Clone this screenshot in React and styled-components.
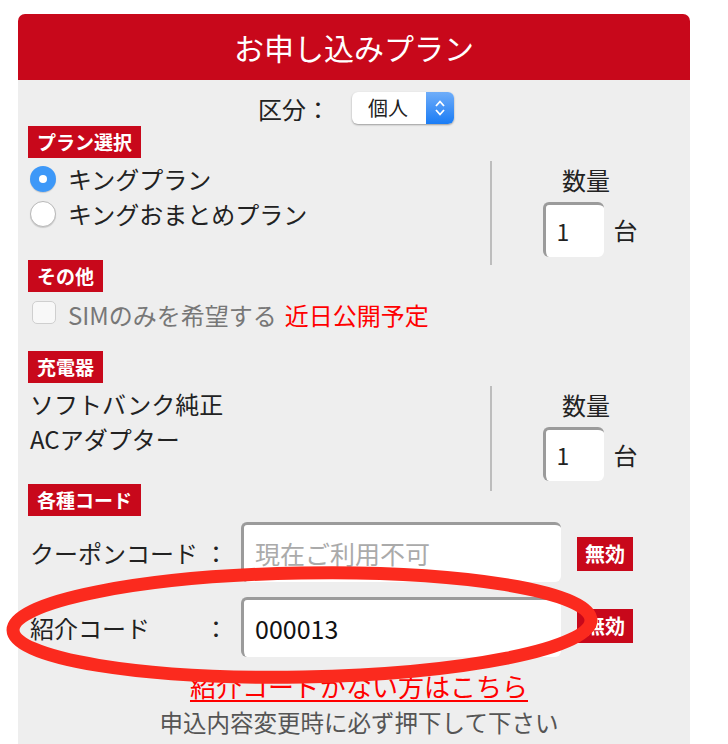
import styled, { createGlobalStyle } from "styled-components";

const GlobalStyle = createGlobalStyle`
  body {
    margin: 0;
    background: #fff;
    font-family: "Noto Sans CJK JP", "Noto Sans", sans-serif;
    color: #222;
  }
`;

const RED = "#c8081b";

const Page = styled.div`
  position: relative;
  width: 728px;
  height: 744px;
  overflow: hidden;
  padding: 14px 0 0 18px;
  box-sizing: border-box;
`;

const Panel = styled.div`
  width: 672px;
`;

const Header = styled.div`
  height: 66px;
  background: ${RED};
  border-radius: 7px 7px 0 0;
  color: #fff;
  font-size: 30px;
  display: flex;
  align-items: center;
  justify-content: center;
`;

const Body = styled.div`
  background: #eeeeee;
  padding: 12px 10px 40px;
  display: flex;
  flex-direction: column;
  font-size: 24px;
  line-height: 35px;
`;

const KubunRow = styled.div`
  display: flex;
  align-items: center;
  justify-content: center;
  gap: 22px;
  height: 32px;
  padding-left: 4px;
`;

const Select = styled.div`
  width: 102px;
  height: 32px;
  display: flex;
  background: #fff;
  border-radius: 6px;
  box-shadow: 0 1px 2px rgba(0, 0, 0, 0.35);
  overflow: hidden;
  font-size: 20px;
  line-height: 32px;
`;

const SelectValue = styled.div`
  flex: 1;
  padding-left: 16px;
`;

const SelectArrow = styled.div`
  width: 28px;
  background: linear-gradient(#6fadf9, #1a7cf5);
  display: flex;
  align-items: center;
  justify-content: center;
`;

const Tag = styled.div`
  align-self: flex-start;
  background: ${RED};
  color: #fff;
  font-weight: bold;
  font-size: 19px;
  height: 32px;
  line-height: 32px;
  padding: 0 9px;
  margin-top: ${(p) => p.$mt || 0}px;
`;

const SplitRow = styled.div`
  display: flex;
  height: ${(p) => p.$h}px;
  margin-top: 3px;
`;

const Left = styled.div`
  flex: 1;
  padding-left: 2px;
`;

const Divider = styled.div`
  width: 2px;
  background: #bdbdbd;
`;

const Right = styled.div`
  width: 188px;
  display: flex;
  flex-direction: column;
  align-items: center;
  padding-top: 1px;
`;

const QtyLine = styled.div`
  display: flex;
  align-items: center;
  gap: 10px;
  margin-top: 5px;
  padding-left: 8px;
`;

const QtyBox = styled.div`
  width: 61px;
  height: ${(p) => p.$h}px;
  background: #fff;
  border-style: solid;
  border-color: #9b9b9b;
  border-width: 3px 0 0 3px;
  border-radius: 6px;
  padding-left: 11px;
  box-sizing: border-box;
  font-size: 23px;
  display: flex;
  align-items: center;
`;

const RadioRow = styled.div`
  display: flex;
  align-items: center;
  height: 35px;
  gap: 12px;
`;

const Radio = styled.span`
  width: 26px;
  height: 26px;
  border-radius: 50%;
  box-sizing: border-box;
  display: flex;
  align-items: center;
  justify-content: center;
  background: ${(p) => (p.$on ? "#3d98f8" : "#fff")};
  border: ${(p) => (p.$on ? "none" : "1px solid #b8b8b8")};
  box-shadow: 0 1px 1px rgba(0, 0, 0, 0.15);
  &::after {
    content: "";
    display: ${(p) => (p.$on ? "block" : "none")};
    width: 8px;
    height: 8px;
    border-radius: 50%;
    background: #fff;
  }
`;

const CheckRow = styled.div`
  display: flex;
  align-items: center;
  gap: 12px;
  height: 35px;
  margin-top: 5px;
  padding-left: 4px;
  color: #777;
`;

const CheckBox = styled.span`
  width: 24px;
  height: 23px;
  border-radius: 5px;
  border: 1px solid #cfcfcf;
  background: #f8f8f8;
  box-sizing: border-box;
  margin-bottom: 5px;
`;

const Soon = styled.span`
  color: #f00;
  margin-left: -4px;
`;

const CodeRow = styled.div`
  display: flex;
  align-items: center;
  margin-top: ${(p) => p.$mt}px;
  padding-left: 2px;
`;

const CodeLabel = styled.div`
  width: 198px;
  display: flex;
  justify-content: space-between;
  margin-right: 13px;
`;

const CodeInput = styled.div`
  width: 320px;
  height: 60px;
  background: #fff;
  border-style: solid;
  border-color: #9b9b9b;
  border-width: 3px 0 0 3px;
  border-radius: 6px;
  box-sizing: border-box;
  padding-left: 11px;
  font-size: 25px;
  display: flex;
  align-items: center;
  color: ${(p) => (p.$ph ? "#aaa" : "#111")};
`;

const OffButton = styled.div`
  margin-left: 16px;
  background: ${RED};
  color: #fff;
  font-weight: bold;
  font-size: 20px;
  height: 34px;
  line-height: 34px;
  padding: 0 8px;
  margin-top: ${(p) => (p.$low ? -2 : 4)}px;
`;

const Link = styled.a`
  align-self: center;
  margin-top: 11px;
  color: #f00;
  font-size: 26px;
  text-decoration: underline;
  text-underline-offset: 3px;
  padding-left: 10px;
`;

const Note = styled.div`
  align-self: center;
  color: #555;
  font-size: 23.5px;
  margin-top: 2px;
  padding-left: 10px;
`;

const Circle = styled.svg`
  position: absolute;
  left: 0;
  top: 0;
  pointer-events: none;
`;

function Quantity({ h }) {
  return (
    <Right>
      <div>数量</div>
      <QtyLine>
        <QtyBox $h={h}>1</QtyBox>
        <span>台</span>
      </QtyLine>
    </Right>
  );
}

export default function App() {
  return (
    <Page>
      <GlobalStyle />
      <Panel>
        <Header>お申し込みプラン</Header>
        <Body>
          <KubunRow>
            <span>区分：</span>
            <Select>
              <SelectValue>個人</SelectValue>
              <SelectArrow>
                <svg width="12" height="20" viewBox="0 0 12 20">
                  <path d="M2 8 L6 3.5 L10 8 M2 12 L6 16.5 L10 12" stroke="#fff" strokeWidth="1.8" fill="none" />
                </svg>
              </SelectArrow>
            </Select>
          </KubunRow>

          <Tag $mt={2}>プラン選択</Tag>
          <SplitRow $h={104}>
            <Left>
              <RadioRow>
                <Radio $on />
                キングプラン
              </RadioRow>
              <RadioRow>
                <Radio />
                キングおまとめプラン
              </RadioRow>
            </Left>
            <Divider />
            <Quantity h={55} />
          </SplitRow>

          <Tag $mt={-5}>その他</Tag>
          <CheckRow>
            <CheckBox />
            SIMのみを希望する
            <Soon>近日公開予定</Soon>
          </CheckRow>

          <Tag $mt={19}>充電器</Tag>
          <SplitRow $h={105}>
            <Left>
              <div>ソフトバンク純正</div>
              <div>ACアダプター</div>
            </Left>
            <Divider />
            <Quantity h={54} />
          </SplitRow>

          <Tag $mt={-7}>各種コード</Tag>
          <CodeRow $mt={6}>
            <CodeLabel>
              <span>クーポンコード</span>
              <span>：</span>
            </CodeLabel>
            <CodeInput $ph>現在ご利用不可</CodeInput>
            <OffButton>無効</OffButton>
          </CodeRow>
          <CodeRow $mt={15}>
            <CodeLabel>
              <span>紹介コード</span>
              <span>：</span>
            </CodeLabel>
            <CodeInput>000013</CodeInput>
            <OffButton $low>無効</OffButton>
          </CodeRow>

          <Link href="#">紹介コードがない方はこちら</Link>
          <Note>申込内容変更時に必ず押下して下さい</Note>
        </Body>
      </Panel>
      <Circle width="728" height="744">
        <ellipse
          cx="302"
          cy="625"
          rx="289"
          ry="52"
          transform="rotate(-1 302 625)"
          fill="none"
          stroke="#fb2a1e"
          strokeWidth="13"
        />
      </Circle>
    </Page>
  );
}
